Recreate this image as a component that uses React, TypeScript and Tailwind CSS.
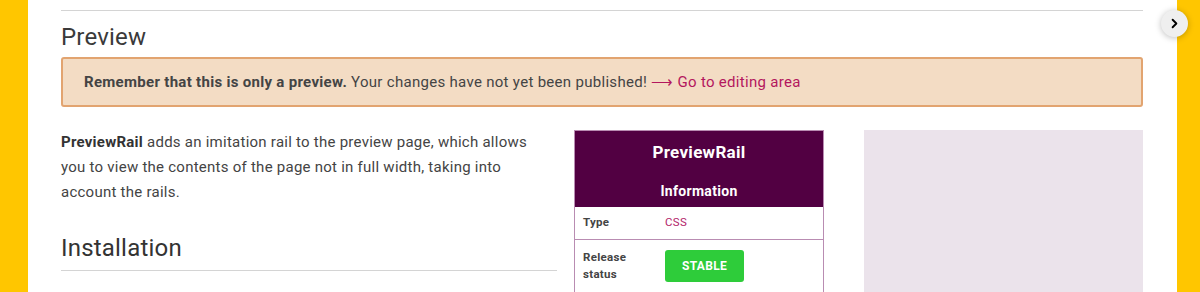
import { ChevronRight } from 'lucide-react';

function InfoBox() {
  return (
    <div className="w-[250px] shrink-0 border border-[#b98cb2] text-[11.5px] tracking-[0.3px] self-start">
      <div className="bg-[#520042] text-white text-center font-bold">
        <div className="h-[44px] flex items-center justify-center text-[17px]">PreviewRail</div>
        <div className="h-[32px] flex items-center justify-center text-[14px]">Information</div>
      </div>
      <div className="flex h-[33px] items-center border-b border-[#b98cb2]">
        <div className="w-[90px] pl-2 font-bold text-[#444]">Type</div>
        <div className="text-[#b3246a]">CSS</div>
      </div>
      <div className="flex h-[52px] items-center">
        <div className="w-[90px] pl-2 font-bold text-[#444] leading-[17px]">
          Release
          <br />
          status
        </div>
        <div className="w-[79px] h-[32px] rounded-[3px] bg-[#2ecc3a] text-white text-[12px] font-bold flex items-center justify-center">
          STABLE
        </div>
      </div>
    </div>
  );
}

export default function App() {
  return (
    <div
      className="relative flex h-[292px] w-[1200px] overflow-hidden bg-white text-[#333]"
      style={{ fontFamily: 'Roboto, "Noto Sans", sans-serif' }}
    >
      <div className="w-[28px] shrink-0 bg-[#ffc600]" />
      <main className="flex-1 pl-[33px] pr-[34px]">
        <div className="mt-[10px] border-t border-[#d4d4d4]" />
        <h1 className="mt-[12px] text-[24px] leading-[28px] tracking-[0.2px] text-[#3a3a3a]">Preview</h1>
        <div className="mt-[6px] h-[50px] rounded-[3px] border-2 border-[#e2a470] bg-[#f3dcc4] pl-[21px] flex items-center text-[15px] tracking-[0.3px] text-[#444]">
          <span className="font-bold">Remember that this is only a preview.</span>
          <span>&nbsp;Your changes have not yet been published!&nbsp;</span>
          <a className="text-[#b3175e]">⟶ Go to editing area</a>
        </div>
        <div className="mt-[23px] flex">
          <div className="w-[496px] shrink-0">
            <p className="text-[15px] leading-[25px] tracking-[0.25px] text-[#444] pr-[20px]">
              <b className="font-bold text-[#333]">PreviewRail</b> adds an imitation rail to the preview page, which allows you
              to view the contents of the page not in full width, taking into account the rails.
            </p>
            <h2 className="mt-[29px] pb-[8px] text-[24px] leading-[28px] tracking-[0.2px] text-[#333] border-b border-[#d4d4d4]">
              Installation
            </h2>
          </div>
          <div className="ml-[17px]">
            <InfoBox />
          </div>
          <div className="ml-[40px] h-[170px] w-[279px] bg-[#ebe3eb]" />
        </div>
      </main>
      <div className="w-[25px] shrink-0 bg-[#ffc600]" />
      <button className="absolute left-[1161px] top-[10px] h-[27px] w-[27px] rounded-full bg-[#efefef] shadow-[0_1px_6px_rgba(0,0,0,0.25)] flex items-center justify-center">
        <ChevronRight className="h-[15px] w-[15px] text-black" strokeWidth={3} />
      </button>
    </div>
  );
}
